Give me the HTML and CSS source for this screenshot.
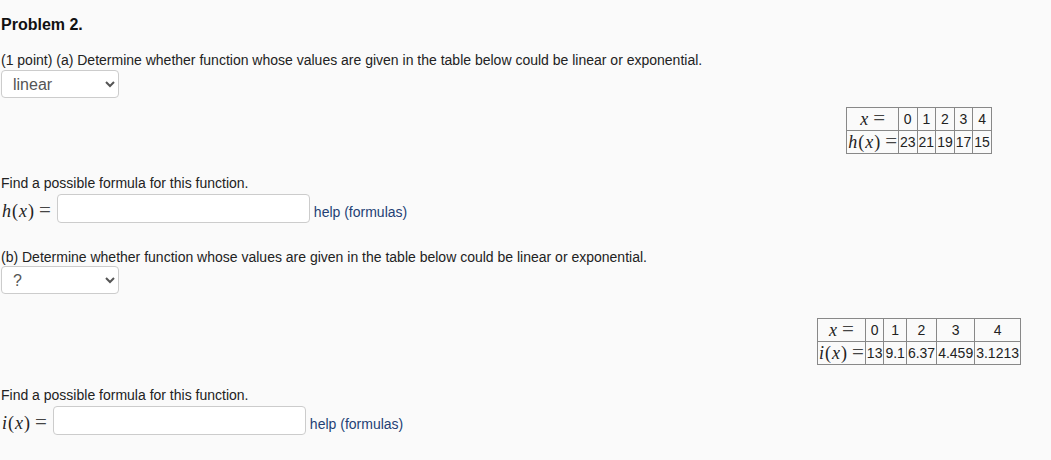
FILE: index.html
```html
<!DOCTYPE html>
<html>
<head>
<meta charset="utf-8">
<title>Problem 2</title>
<link rel="stylesheet" href="styles.css">
</head>
<body>
<div class="page">
  <h1 class="title">Problem 2.</h1>

  <p class="q q-a">(1 point) (a) Determine whether function whose values are given in the table below could be linear or exponential.</p>
  <select class="sel"><option>linear</option><option>exponential</option></select>

  <div class="table-row tr-a">
    <div class="table-box">
      <table class="vals">
        <tr>
          <td class="lab"><span class="math"><span class="mi">x</span><span class="rel">=</span></span></td>
          <td>0</td><td>1</td><td>2</td><td>3</td><td>4</td>
        </tr>
        <tr>
          <td class="lab"><span class="math"><span class="mi">h</span><span class="mo">(</span><span class="mi">x</span><span class="mo">)</span><span class="rel">=</span></span></td>
          <td>23</td><td>21</td><td>19</td><td>17</td><td>15</td>
        </tr>
      </table>
    </div>
  </div>

  <p class="find find-a">Find a possible formula for this function.</p>
  <div class="ans ans-a">
    <span class="math ans-math"><span class="mi">h</span><span class="mo">(</span><span class="mi">x</span><span class="mo">)</span><span class="rel">=</span></span>
    <input class="field" type="text">
    <a class="help" href="#">help (formulas)</a>
  </div>

  <p class="q q-b">(b) Determine whether function whose values are given in the table below could be linear or exponential.</p>
  <select class="sel"><option>?</option><option>linear</option><option>exponential</option></select>

  <div class="table-row tr-b">
    <div class="table-box">
      <table class="vals">
        <tr>
          <td class="lab"><span class="math"><span class="mi">x</span><span class="rel">=</span></span></td>
          <td>0</td><td>1</td><td>2</td><td>3</td><td>4</td>
        </tr>
        <tr>
          <td class="lab"><span class="math"><span class="mi">i</span><span class="mo">(</span><span class="mi">x</span><span class="mo">)</span><span class="rel">=</span></span></td>
          <td>13</td><td>9.1</td><td>6.37</td><td>4.459</td><td>3.1213</td>
        </tr>
      </table>
    </div>
  </div>

  <p class="find find-b">Find a possible formula for this function.</p>
  <div class="ans ans-b">
    <span class="math ans-math"><span class="mi">i</span><span class="mo">(</span><span class="mi">x</span><span class="mo">)</span><span class="rel">=</span></span>
    <input class="field" type="text">
    <a class="help" href="#">help (formulas)</a>
  </div>
</div>
</body>
</html>
```

FILE: styles.css
```css
html, body {
  margin: 0;
  padding: 0;
  background: #fafafa;
}

body {
  font-family: "Liberation Sans", Arial, sans-serif;
  font-size: 14px;
  color: #222;
}

.page {
  padding-left: 1px;
}

.title {
  margin: 15px 0 0;
  font-size: 16px;
  font-weight: bold;
  line-height: 20px;
  color: #111;
}

.q {
  margin: 16px 0 0;
  line-height: 18px;
}

.q-b {
  margin-top: 25px;
}

.sel {
  display: block;
  margin: 1px 0 0;
  width: 118px;
  height: 28px;
  padding: 0 6px 0 7px;
  font-family: "Liberation Sans", Arial, sans-serif;
  font-size: 16px;
  color: #555;
  background-color: #fff;
  border: 1px solid #ccc;
  border-radius: 4px;
}

.q-b + .sel {
  margin-top: 0;
}

.table-row {
  display: flex;
  justify-content: flex-end;
}

.tr-a {
  margin-top: 9px;
}

.tr-b {
  margin-top: 24px;
}

.table-box {
  width: 220px;
  margin-right: 22px;
  display: flex;
  justify-content: center;
}

.vals {
  border-collapse: collapse;
  font-size: 14px;
  color: #222;
}

.vals td {
  border: 1px solid #888;
  padding: 0 1px;
  height: 22px;
  line-height: 20px;
  text-align: center;
}

.vals td.lab {
  padding: 0 1px;
}

.math {
  font-family: "Liberation Serif", "Times New Roman", serif;
  font-size: 18px;
  color: #222;
  white-space: nowrap;
}

.mi {
  font-style: italic;
  letter-spacing: 1px;
}

.mo {
  letter-spacing: 1px;
}

.rel {
  margin-left: 4px;
  font-size: 21px;
  line-height: 18px;
  color: #444;
}

.find {
  margin: 20px 0 0;
  line-height: 18px;
}

.find-b {
  margin-top: 21px;
}

.ans {
  display: flex;
  align-items: flex-start;
  margin-top: 2px;
}

.ans-b {
  margin-top: 2px;
}

.ans-math {
  line-height: 20px;
  margin-top: 7px;
  margin-left: 1px;
  margin-right: 6px;
}

.field {
  box-sizing: border-box;
  width: 253px;
  height: 29px;
  margin: 0;
  padding: 2px 6px;
  font-family: "Liberation Sans", Arial, sans-serif;
  font-size: 14px;
  background: #fff;
  border: 1px solid #ccc;
  border-radius: 4px;
}

.help {
  margin-top: 9px;
  margin-left: 4px;
  line-height: 18px;
  color: #233f75;
  text-decoration: none;
}
```
